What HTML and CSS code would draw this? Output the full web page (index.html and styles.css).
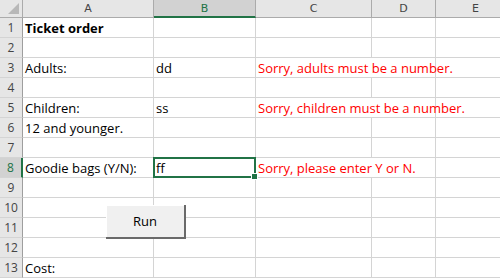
FILE: index.html
```html
<!DOCTYPE html>
<html>
<head>
<meta charset="utf-8">
<link rel="stylesheet" href="styles.css">
</head>
<body>
<div class="sheet">
  <div class="corner"><span class="tri"></span></div>
  <div class="colhead">A</div>
  <div class="colhead sel">B</div>
  <div class="colhead">C</div>
  <div class="colhead">D</div>
  <div class="colhead">E</div>

  <div class="rowhead">1</div>
  <div class="cell bold">Ticket order</div><div class="cell"></div><div class="cell"></div><div class="cell"></div><div class="cell"></div>

  <div class="rowhead">2</div>
  <div class="cell"></div><div class="cell"></div><div class="cell"></div><div class="cell"></div><div class="cell"></div>

  <div class="rowhead">3</div>
  <div class="cell">Adults:</div><div class="cell">dd</div><div class="cell span2 err">Sorry, adults must be a number.</div><div class="cell"></div>

  <div class="rowhead">4</div>
  <div class="cell"></div><div class="cell"></div><div class="cell"></div><div class="cell"></div><div class="cell"></div>

  <div class="rowhead">5</div>
  <div class="cell">Children:</div><div class="cell">ss</div><div class="cell span2 err">Sorry, children must be a number.</div><div class="cell"></div>

  <div class="rowhead">6</div>
  <div class="cell">12 and younger.</div><div class="cell"></div><div class="cell"></div><div class="cell"></div><div class="cell"></div>

  <div class="rowhead">7</div>
  <div class="cell"></div><div class="cell"></div><div class="cell"></div><div class="cell"></div><div class="cell"></div>

  <div class="rowhead sel">8</div>
  <div class="cell">Goodie bags (Y/N):</div><div class="cell active">ff<span class="handle"></span></div><div class="cell span2 err">Sorry, please enter Y or N.</div><div class="cell"></div>

  <div class="rowhead">9</div>
  <div class="cell"></div><div class="cell"></div><div class="cell"></div><div class="cell"></div><div class="cell"></div>

  <div class="rowhead">10</div>
  <div class="cell"></div><div class="cell"></div><div class="cell"></div><div class="cell"></div><div class="cell"></div>

  <div class="rowhead">11</div>
  <div class="cell"></div><div class="cell"></div><div class="cell"></div><div class="cell"></div><div class="cell"></div>

  <div class="rowhead">12</div>
  <div class="cell"></div><div class="cell"></div><div class="cell"></div><div class="cell"></div><div class="cell"></div>

  <div class="rowhead">13</div>
  <div class="cell">Cost:</div><div class="cell"></div><div class="cell"></div><div class="cell"></div><div class="cell"></div>

  <button class="run">Run</button>
</div>
</body>
</html>
```
FILE: styles.css
```css
html, body {
  margin: 0;
  padding: 0;
  background: #ffffff;
  overflow: hidden;
}
.sheet {
  position: relative;
  display: grid;
  grid-template-columns: 23px 131px 102px 116px 64px 80px;
  grid-template-rows: 18px repeat(13, 20px);
  width: 500px;
  height: 278px;
  font-family: "Open Sans", "Noto Sans", sans-serif;
  font-size: 13px;
  color: #000;
}
.corner {
  box-sizing: border-box;
  background: #e6e6e6;
  border-right: 1px solid #ababab;
  border-bottom: 1px solid #ababab;
  position: relative;
}
.tri {
  position: absolute;
  right: 3px;
  bottom: 3px;
  width: 0;
  height: 0;
  border-left: 11px solid transparent;
  border-bottom: 11px solid #b8b8b8;
}
.colhead {
  box-sizing: border-box;
  background: #e6e6e6;
  border-right: 1px solid #ababab;
  border-bottom: 1px solid #ababab;
  display: flex;
  align-items: center;
  justify-content: center;
  font-family: "DejaVu Sans", sans-serif;
  font-size: 11px;
  color: #444;
}
.colhead.sel {
  background: #d2d2d2;
  border-bottom: 2px solid #217346;
  color: #217346;
}
.rowhead {
  box-sizing: border-box;
  background: #e6e6e6;
  border-right: 1px solid #9e9e9e;
  border-bottom: 1px solid #d4d4d4;
  display: flex;
  align-items: center;
  justify-content: center;
  font-family: "Open Sans", sans-serif;
  font-size: 12px;
  color: #444;
}
.rowhead.sel {
  background: #d2d2d2;
  border-right: 2px solid #217346;
  color: #217346;
}
.cell {
  box-sizing: border-box;
  border-right: 1px solid #d4d4d4;
  border-bottom: 1px solid #d4d4d4;
  padding: 0 2px;
  display: flex;
  align-items: flex-end;
  white-space: nowrap;
  line-height: 18px;
}
.cell.bold {
  font-weight: bold;
}
.cell.span2 {
  grid-column: span 2;
}
.cell.err {
  color: #ff0000;
}
.cell.active {
  position: relative;
  border: 2px solid #217346;
  margin: -1px 0 0 -1px;
  padding-left: 1px;
  line-height: 16px;
}
.handle {
  position: absolute;
  right: -4px;
  bottom: -4px;
  width: 5px;
  height: 5px;
  background: #217346;
  border: 1px solid #fff;
}
.run {
  position: absolute;
  left: 106px;
  top: 205px;
  width: 80px;
  height: 34px;
  background: #f0f0f0;
  border: none;
  border-right: 2px solid #6a6a6a;
  border-bottom: 2px solid #6a6a6a;
  box-shadow: inset 1px 1px 0 #ffffff;
  font-family: "Open Sans", sans-serif;
  font-size: 13px;
  color: #000;
  padding: 0;
}
```
